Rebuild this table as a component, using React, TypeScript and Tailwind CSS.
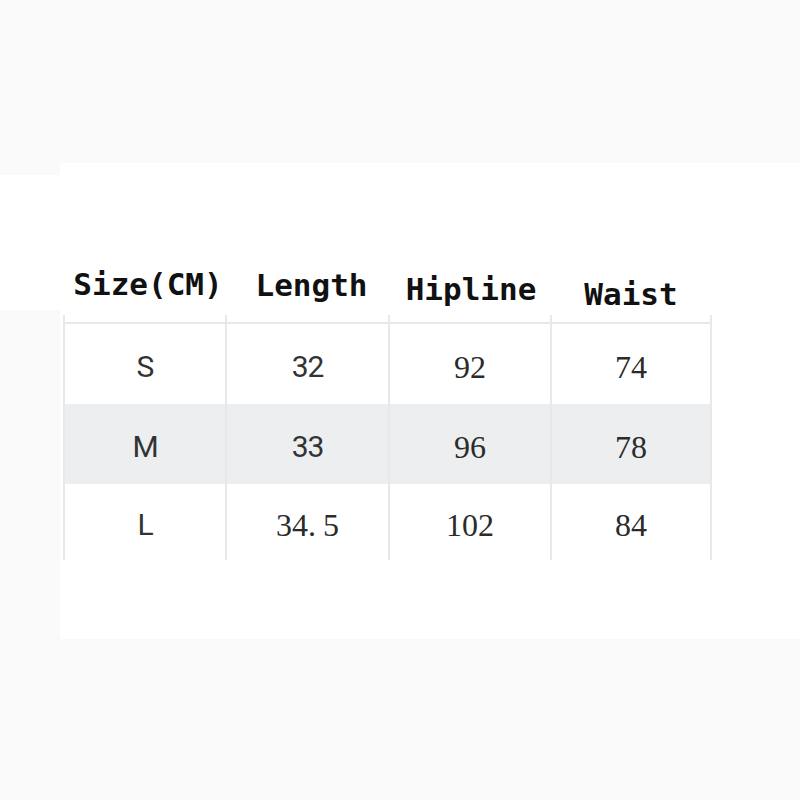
const headers = [
  { label: 'Size(CM)', pad: 'pt-[106px] pl-[8px]' },
  { label: 'Length', pad: 'pt-[107px] pl-[10px]' },
  { label: 'Hipline', pad: 'pt-[111px] pl-[4px]' },
  { label: 'Waist', pad: 'pt-[116px]' },
]

type Cell = { text: string; sans?: boolean }

const rows: { cells: Cell[]; bg: string; h: string }[] = [
  {
    cells: [{ text: 'S', sans: true }, { text: '32', sans: true }, { text: '92' }, { text: '74' }],
    bg: 'bg-white',
    h: 'h-[80px]',
  },
  {
    cells: [{ text: 'M', sans: true }, { text: '33', sans: true }, { text: '96' }, { text: '78' }],
    bg: 'bg-[#eceef0]',
    h: 'h-[80px]',
  },
  {
    cells: [{ text: 'L', sans: true }, { text: '34.5' }, { text: '102' }, { text: '84' }],
    bg: 'bg-white',
    h: 'h-[76px]',
  },
]

const cols = 'grid grid-cols-[162px_163px_162px_162px] w-[649px]'

function CellText({ cell }: { cell: Cell }) {
  if (cell.sans) {
    return (
      <span className="font-['Roboto',sans-serif] text-[30px] leading-none tracking-[-1px] text-[#333]">
        {cell.text}
      </span>
    )
  }
  if (cell.text.includes('.')) {
    const [a, b] = cell.text.split('.')
    return (
      <span className="font-['Liberation_Serif',serif] text-[32px] leading-none text-[#2b2b2b]">
        {a}
        <span className="mr-[7px]">.</span>
        {b}
      </span>
    )
  }
  return (
    <span className="font-['Liberation_Serif',serif] text-[32px] leading-none text-[#2b2b2b]">
      {cell.text}
    </span>
  )
}

export default function App() {
  return (
    <div className="w-[800px] min-h-[800px] bg-[#fafafa]">
      <div className="h-[163px]" />
      <div className="flex h-[476px]">
        <div className="w-[60px] flex flex-col">
          <div className="h-[12px]" />
          <div className="h-[135px] bg-white" />
        </div>
        <div className="flex-1 bg-white pl-[3px]">
          {/* headers */}
          <div className={`${cols} h-[152px]`}>
            {headers.map((h) => (
              <div key={h.label} className={`flex justify-center ${h.pad}`}>
                <span className="font-['DejaVu_Sans_Mono',monospace] font-bold text-[31px] leading-none text-[#111]">
                  {h.label}
                </span>
              </div>
            ))}
          </div>

          {/* little stubs of the column lines above the top rule */}
          <div className={`${cols} h-[7px]`}>
            {headers.map((h, i) => (
              <div
                key={h.label}
                className={`border-l-2 border-[#e8e8e8] ${i === 3 ? 'border-r-2' : ''}`}
              />
            ))}
          </div>

          <div className="w-[649px] border-t-2 border-[#e8e8e8]">
            {rows.map((r, ri) => (
              <div key={ri} className={`${cols} ${r.h} ${r.bg}`}>
                {r.cells.map((c, ci) => (
                  <div
                    key={ci}
                    className={`flex items-center justify-center pt-[6px] border-l-2 border-[#e8e8e8] ${
                      ci === 3 ? 'border-r-2' : ''
                    }`}
                  >
                    <CellText cell={c} />
                  </div>
                ))}
              </div>
            ))}
          </div>
        </div>
      </div>
    </div>
  )
}
